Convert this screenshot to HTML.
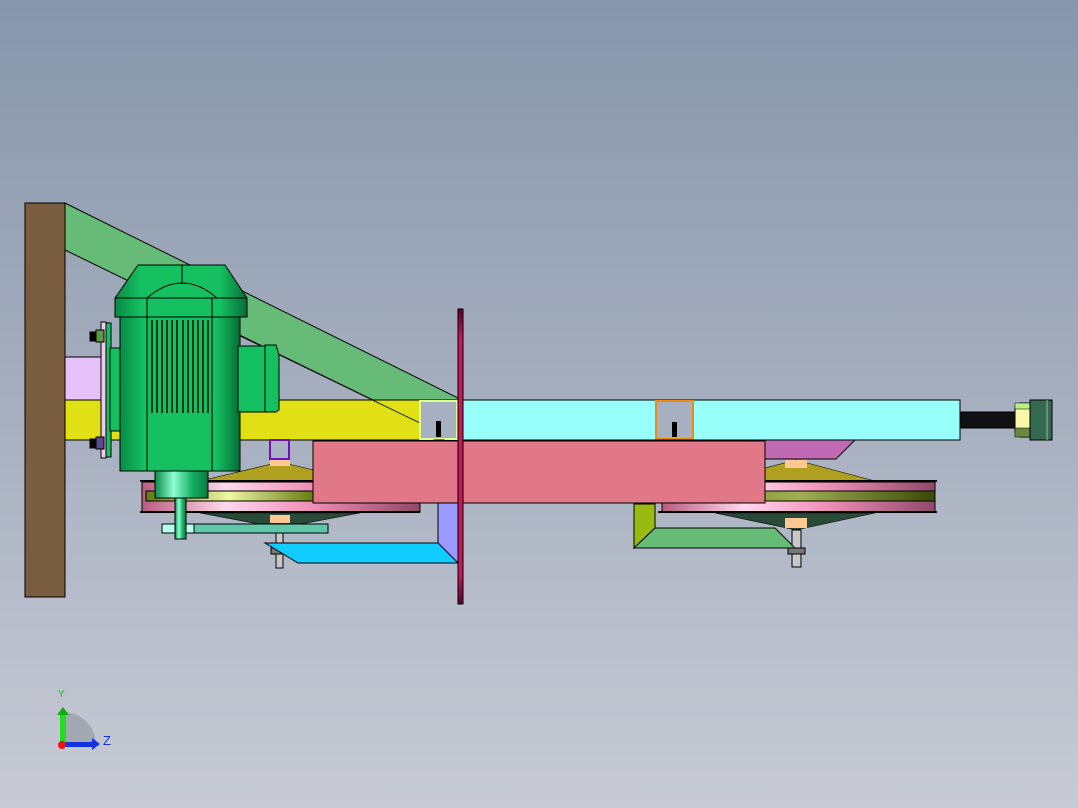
<!DOCTYPE html>
<html><head><style>
html,body{margin:0;padding:0;width:1078px;height:808px;overflow:hidden;}
body{background:linear-gradient(#8796ab 0%,#a6afbf 50%,#c8cbd5 100%);font-family:"Liberation Sans",sans-serif;}
svg{position:absolute;left:0;top:0;}
</style></head><body>
<svg width="1078" height="808" viewBox="0 0 1078 808">
<defs>
<linearGradient id="mg" x1="0" x2="1"><stop offset="0" stop-color="#078a45"/><stop offset=".2" stop-color="#14c060"/><stop offset=".8" stop-color="#14c060"/><stop offset="1" stop-color="#056c36"/></linearGradient>
<linearGradient id="cyl" x1="0" x2="1"><stop offset="0" stop-color="#0a8a48"/><stop offset=".35" stop-color="#8fffd0"/><stop offset=".7" stop-color="#15b065"/><stop offset="1" stop-color="#087a40"/></linearGradient>
<linearGradient id="pk" x1="0" x2="1"><stop offset="0" stop-color="#b85c80"/><stop offset=".3" stop-color="#ffd8ec"/><stop offset=".6" stop-color="#f090b8"/><stop offset="1" stop-color="#904868"/></linearGradient>
<linearGradient id="ol" x1="0" x2="1"><stop offset="0" stop-color="#5f7a10"/><stop offset=".3" stop-color="#f0f8a0"/><stop offset=".6" stop-color="#6a8018"/><stop offset="1" stop-color="#4a5c10"/></linearGradient>
<linearGradient id="ol2" x1="0" x2="1"><stop offset="0" stop-color="#5f7a10"/><stop offset=".5" stop-color="#a0b050"/><stop offset="1" stop-color="#3a4a08"/></linearGradient>
<linearGradient id="rp" x1="0" x2="0" y1="0" y2="1"><stop offset="0" stop-color="#60002a"/><stop offset=".1" stop-color="#c8185c"/><stop offset=".9" stop-color="#c8185c"/><stop offset="1" stop-color="#60002a"/></linearGradient>
</defs>
<g stroke="#000" stroke-width="1">
<polygon points="65,203 458,398 458,412 420,423 65,250" fill="#66bb77"/>
<rect x="25" y="203" width="40" height="394" fill="#7a5c3f"/>
<rect x="65" y="357" width="38" height="65" fill="#e6c0f8"/>
<rect x="65" y="400" width="355" height="40" fill="#e0e014"/>
<line x1="238" y1="335" x2="420" y2="423" stroke-width="0.8"/>
<rect x="420" y="400" width="540" height="40" fill="#99fffa"/>
<rect x="420" y="401" width="37" height="38" fill="#a7b0c0" stroke="#d8ff90" stroke-width="2"/>
<rect x="436" y="421" width="5" height="16" fill="#000" stroke="none"/>
<rect x="656" y="401" width="37" height="38" fill="#a7b0c0" stroke="#f08a10" stroke-width="2"/>
<rect x="672" y="422" width="5" height="15" fill="#000" stroke="none"/>
<rect x="434" y="440" width="10" height="7" fill="#b0f0f0"/>
<rect x="670" y="440" width="10" height="7" fill="#b0f0f0"/>
<polygon points="640,440 855,440 836,459 640,459" fill="#c06ab4"/>
<rect x="960" y="412" width="55" height="16" fill="#111"/>
<polygon points="1015,408 1020,403 1030,403 1032,408 1032,432 1030,437 1020,437 1015,432" fill="#f8f8a8"/>
<rect x="1015" y="403" width="15" height="6" fill="#b8f080" stroke-width=".5"/>
<rect x="1015" y="428" width="15" height="9" fill="#6a8840" stroke-width=".5"/>
<rect x="1030" y="400" width="22" height="40" fill="#356a50"/>
<line x1="1047" y1="400" x2="1047" y2="440" stroke="#88c0a0"/>
<g>
<polygon points="200,481 280,462 360,481" fill="#b0a020" stroke-width=".6"/>
<polygon points="200,513 280,528 360,513" fill="#2a4a38" stroke-width=".6"/>
<rect x="142" y="482" width="278" height="30" fill="url(#pk)"/>
<rect x="146" y="491" width="274" height="10" fill="url(#ol)"/>
<line x1="140" y1="481" x2="420" y2="481" stroke-width="2"/>
<line x1="140" y1="512" x2="420" y2="512" stroke-width="2"/>
<rect x="270" y="458" width="20" height="8" fill="#ffc890" stroke="none"/>
<rect x="270" y="515" width="20" height="8" fill="#ffc890" stroke="none"/>
<rect x="270" y="440" width="19" height="19" fill="none" stroke="#7010c0" stroke-width="2"/>
<rect x="276" y="528" width="7" height="40" fill="#c8c8c8"/>
<rect x="271" y="548" width="16" height="6" fill="#777"/>
</g>
<g>
<polygon points="715,481 796,460 875,481" fill="#b0a020" stroke-width=".6"/>
<polygon points="715,513 796,530 875,513" fill="#2a4a38" stroke-width=".6"/>
<rect x="662" y="482" width="273" height="30" fill="url(#pk)"/>
<rect x="662" y="491" width="273" height="10" fill="url(#ol2)"/>
<line x1="658" y1="481" x2="937" y2="481" stroke-width="2"/>
<line x1="658" y1="512" x2="937" y2="512" stroke-width="2"/>
<rect x="785" y="460" width="22" height="8" fill="#ffc890" stroke="none"/>
<rect x="785" y="518" width="22" height="10" fill="#ffc890" stroke="none"/>
<rect x="792" y="530" width="9" height="37" fill="#c8c8c8"/>
<rect x="788" y="548" width="17" height="6" fill="#777"/>
</g>
<rect x="313" y="441" width="452" height="62" fill="#e07888"/>
<rect x="162" y="524" width="166" height="9" fill="#60c8a8"/>
<rect x="162" y="524" width="32" height="9" fill="#b8fff0"/>
<polygon points="438,503 458,503 458,563 438,543" fill="#9999ff"/>
<polygon points="265,543 438,543 458,563 298,563" fill="#11ccff"/>
<polygon points="634,504 655,504 655,528 634,548" fill="#99bb11"/>
<polygon points="655,528 775,528 795,548 634,548" fill="#66bb77"/>
<rect x="458" y="309" width="5" height="295" fill="url(#rp)"/>
<rect x="101" y="322" width="5" height="136" fill="#f0c8f0"/>
<rect x="106" y="323" width="5" height="134" fill="#14c060"/>
<rect x="110" y="348" width="25" height="83" fill="#14c060"/>
<rect x="96" y="330" width="8" height="12" fill="#5a9a40"/>
<rect x="96" y="437" width="8" height="12" fill="#5a4a90"/>
<rect x="90" y="332" width="6" height="9" fill="#000"/>
<rect x="90" y="439" width="6" height="9" fill="#000"/>
<rect x="120" y="315" width="120" height="156" fill="url(#mg)"/>
<polygon points="138,265 225,265 247,298 247,317 115,317 115,298" fill="url(#mg)"/>
<line x1="182" y1="265" x2="182" y2="284"/>
<path d="M147,298 Q182,268 217,298" fill="none"/>
<line x1="147" y1="298" x2="147" y2="471"/>
<line x1="212" y1="298" x2="212" y2="471"/>
<line x1="115" y1="298" x2="247" y2="298"/>
<g stroke="#0a3a1a" stroke-width="2">
<line x1="152" y1="320" x2="152" y2="413"/><line x1="157" y1="320" x2="157" y2="413"/><line x1="162" y1="320" x2="162" y2="413"/><line x1="167" y1="320" x2="167" y2="413"/><line x1="172" y1="320" x2="172" y2="413"/><line x1="177" y1="320" x2="177" y2="413"/><line x1="183" y1="320" x2="183" y2="413"/><line x1="188" y1="320" x2="188" y2="413"/><line x1="193" y1="320" x2="193" y2="413"/><line x1="198" y1="320" x2="198" y2="413"/><line x1="203" y1="320" x2="203" y2="413"/><line x1="208" y1="320" x2="208" y2="413"/>
</g>
<rect x="238" y="346" width="28" height="66" fill="#14c060"/>
<polygon points="265,345 276,345 279,355 279,410 276,412 265,412" fill="#14c060"/>
<rect x="155" y="471" width="53" height="27" fill="url(#cyl)"/>
<rect x="175" y="498" width="11" height="41" fill="url(#cyl)"/>
</g>
<path d="M63,745 L63,712 A33,33 0 0 1 96,745 Z" fill="#9aa0aa" opacity=".8"/>
<rect x="60" y="712" width="6" height="33" fill="#22dd22"/>
<polygon points="57,715 63,707 69,715" fill="#11aa11"/>
<rect x="63" y="742" width="30" height="5" fill="#1133dd"/>
<polygon points="92,738 100,744 92,750" fill="#1133dd"/>
<circle cx="62" cy="745" r="4" fill="#ee1111"/>
<text x="58" y="697" font-size="10" fill="#11cc11" font-family="Liberation Sans">Y</text>
<text x="103" y="745" font-size="13" fill="#1133dd" font-family="Liberation Sans">Z</text>
</svg>
</body></html>
